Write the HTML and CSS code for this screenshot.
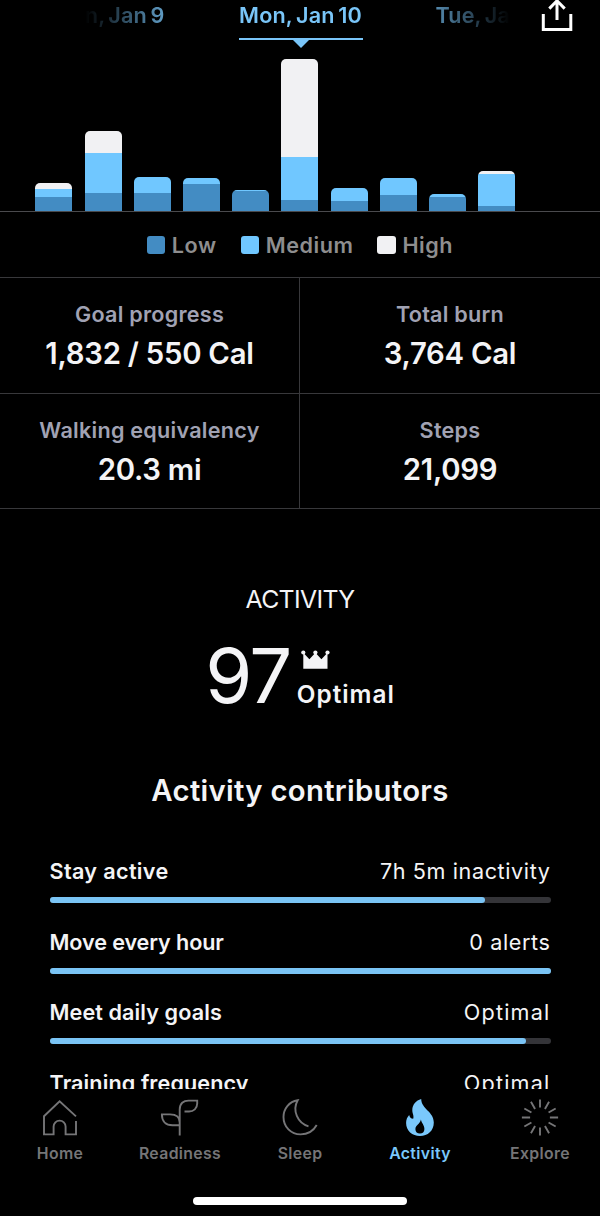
FILE: index.html
```html
<!DOCTYPE html>
<html lang="en">
<head>
<meta charset="utf-8">
<meta name="viewport" content="width=device-width, initial-scale=1">
<title>Activity</title>
<link rel="stylesheet" href="styles.css">
</head>
<body>
<div class="app">
  <main class="content">
    <header class="header">
      <nav class="dates">
        <span class="date date-prev">Sun, Jan 9</span>
        <span class="date date-current">Mon, Jan 10</span>
        <span class="date date-next">Tue, Jan 11</span>
      </nav>
      <svg class="share" viewBox="0 0 36 34" aria-label="Share">
        <path d="M4.3 14V29.6H31.8V14M18 20V0M10.3 8.6 18 .8l7.7 7.8"/>
      </svg>
    </header>

    <section class="chart">
      <div class="bar"><i class="high" style="height:6px"></i><i class="medium" style="height:8px"></i><i class="low" style="height:14px"></i></div>
      <div class="bar"><i class="high" style="height:22px"></i><i class="medium" style="height:39.5px"></i><i class="low" style="height:18.5px"></i></div>
      <div class="bar"><i class="medium" style="height:15.5px"></i><i class="low" style="height:18.5px"></i></div>
      <div class="bar"><i class="medium" style="height:6px"></i><i class="low" style="height:27px"></i></div>
      <div class="bar"><i class="medium" style="height:1px"></i><i class="low" style="height:20px"></i></div>
      <div class="bar"><i class="high" style="height:98px"></i><i class="medium" style="height:43.5px"></i><i class="low" style="height:11px"></i></div>
      <div class="bar"><i class="medium" style="height:13px"></i><i class="low" style="height:10px"></i></div>
      <div class="bar"><i class="medium" style="height:17px"></i><i class="low" style="height:16px"></i></div>
      <div class="bar"><i class="medium" style="height:3px"></i><i class="low" style="height:14px"></i></div>
      <div class="bar"><i class="high" style="height:3px"></i><i class="medium" style="height:31.5px"></i><i class="low" style="height:5.5px"></i></div>
    </section>

    <div class="legend">
      <span class="key"><i class="swatch low"></i>Low</span>
      <span class="key"><i class="swatch medium"></i>Medium</span>
      <span class="key"><i class="swatch high"></i>High</span>
    </div>

    <section class="stats">
      <div class="stat"><span class="stat-label">Goal progress</span><span class="stat-value">1,832 / 550 Cal</span></div>
      <div class="stat"><span class="stat-label">Total burn</span><span class="stat-value">3,764 Cal</span></div>
      <div class="stat"><span class="stat-label">Walking equivalency</span><span class="stat-value">20.3 mi</span></div>
      <div class="stat"><span class="stat-label">Steps</span><span class="stat-value">21,099</span></div>
    </section>

    <section class="summary">
      <h1 class="title">ACTIVITY</h1>
      <div class="score">
        <span class="score-number">97</span>
        <div class="score-side">
          <svg class="crown" viewBox="0 0 29 19">
            <path d="M2.3 2.7 8.4 9.3 14.4 2.7l6 6.6 6.1-6.6v16H2.3z"/>
            <circle cx="2.3" cy="2.5" r="2.1"/><circle cx="14.4" cy="2.5" r="2.1"/><circle cx="26.5" cy="2.5" r="2.1"/>
          </svg>
          <span class="score-word">Optimal</span>
        </div>
      </div>
    </section>

    <h2 class="heading">Activity contributors</h2>
    <section class="contributors">
      <div class="row">
        <div class="row-text"><span class="row-name loose">Stay active</span><span class="row-value">7h 5m inactivity</span></div>
        <div class="track"><div class="fill" style="width:87%"></div></div>
      </div>
      <div class="row">
        <div class="row-text"><span class="row-name tight">Move every hour</span><span class="row-value">0 alerts</span></div>
        <div class="track"><div class="fill" style="width:100%"></div></div>
      </div>
      <div class="row">
        <div class="row-text"><span class="row-name">Meet daily goals</span><span class="row-value wide">Optimal</span></div>
        <div class="track"><div class="fill" style="width:95.1%"></div></div>
      </div>
      <div class="row">
        <div class="row-text"><span class="row-name">Training frequency</span><span class="row-value wide">Optimal</span></div>
      </div>
    </section>
  </main>

  <footer class="footer">
    <nav class="tabs">
      <a class="tab">
        <svg class="icon" viewBox="0 0 40 40"><path d="M36 18.4 19.6 3.4 4 18.2V36.4H13.6V28.6a6 6 0 0 1 12 0V36.4H36V23"/></svg>
        Home
      </a>
      <a class="tab">
        <svg class="icon" viewBox="0 0 40 40"><path d="M19.7 37.4V11.5C19.7 5.5 23.5 2.6 28.5 2.6H37.2V5.6C37.2 10.5 33.6 13.5 29 13.5H24.5M19.7 27.3H12.5C5.5 27.3 1.9 23 1.9 16.4H10C16 16.4 19.7 19 19.7 24.5"/></svg>
        Readiness
      </a>
      <a class="tab">
        <svg class="icon" viewBox="0 0 40 40"><path d="M28.5 28.3C17.5 25 12 12.5 17.7 2.3 9 3.5 3.5 11 3.5 19 3.5 29 11 36.4 20.5 36.4 27.5 36.4 33.5 32.8 36.7 27"/></svg>
        Sleep
      </a>
      <a class="tab active">
        <svg class="icon flame" viewBox="0 0 40 40"><path fill-rule="evenodd" d="M21.2 1C21.3 11 33.8 13.5 33.8 24.5 33.8 32.8 27.8 38 20 38S6.1 32.8 6.1 25C6.1 21.7 7.2 19.2 9.2 17 9.6 19.3 11 20.7 13.2 20.8 14.2 17.8 12.2 15.5 12.3 12 12.4 6.5 16 2.5 21.2 1ZM20.9 21.5C20.3 26 15.4 27 15.4 31.2 15.4 34 17.3 35.6 19.9 35.6S24.4 33.9 24.4 31C24.4 27 21.5 25 20.9 21.5Z"/></svg>
        Activity
      </a>
      <a class="tab">
        <svg class="icon" viewBox="0 0 40 40"><path d="M20 1.4V9.6M20 29.4V37.6M1.9 19.5H10.1M29.9 19.5H38.1M10.95 3.83 15.05 10.93M24.95 28.07 29.05 35.17M4.33 10.45 11.43 14.55M28.57 24.45 35.67 28.55M4.33 28.55 11.43 24.45M28.57 14.55 35.67 10.45M10.95 35.17 15.05 28.07M24.95 10.93 29.05 3.83"/></svg>
        Explore
      </a>
    </nav>
    <div class="home-indicator"></div>
  </footer>
</div>
</body>
</html>
```
FILE: styles.css
```css
:root {
  --low: #438cc3;
  --medium: #70c7ff;
  --high: #f1f1f3;
  --line: #38383b;
  --text: #f4f4f6;
}

* { box-sizing: border-box; }

body {
  margin: 0;
  background: #000;
  color: var(--text);
  font-family: Inter, "Liberation Sans", sans-serif;
  font-weight: 600;
  font-size: 21.6px;
  line-height: 28px;
}

.app { width: 600px; height: 1216px; overflow: hidden; }
.content { height: 1089px; overflow: hidden; }

/* Date strip */
.header { display: flex; height: 58px; }
.dates {
  display: flex;
  justify-content: center;
  align-items: flex-start;
  gap: 74px;
  width: 430px;
  margin-left: 85px;
  padding-top: 2px;
  overflow: hidden;
  color: #79c5f8;
  letter-spacing: .15px;
  word-spacing: -2px;
  white-space: nowrap;
  mask-image: linear-gradient(90deg, transparent, #000 90px, #000 335px, transparent 425px);
}
.date { flex: none; width: 124px; line-height: 27px; text-align: center; }
.date-prev { display: flex; justify-content: flex-end; opacity: .9; }
.date-next { margin-left: -1px; text-align: left; opacity: .85; }
.date-current {
  position: relative;
  padding-bottom: 9px;
  border-bottom: 2px solid #79c5f8;
}
.date-current::after {
  content: "";
  position: absolute;
  top: 37px;
  left: 53px;
  border: 9px solid transparent;
  border-top: 9px solid #79c5f8;
  border-bottom: 0;
}
.share {
  width: 36px;
  height: 34px;
  margin-left: 24px;
  fill: none;
  stroke: #fff;
  stroke-width: 3;
}

/* Chart */
.chart {
  display: flex;
  align-items: flex-end;
  gap: 12.2px;
  height: 154px;
  padding-left: 35.4px;
  border-bottom: 1px solid #4a4a4d;
}
.bar {
  display: flex;
  flex-direction: column;
  width: 37px;
  border-radius: 5px 5px 0 0;
  overflow: hidden;
}
.low { background: var(--low); }
.medium { background: var(--medium); }
.high { background: var(--high); }

.legend {
  display: flex;
  justify-content: center;
  align-items: center;
  gap: 24px;
  height: 65px;
  padding-top: 1px;
  color: #8e8e8f;
  letter-spacing: .55px;
}
.key { display: flex; align-items: center; gap: 6.5px; }
.swatch { width: 18.5px; height: 18.5px; border-radius: 3px; }

/* Stats grid */
.stats {
  display: grid;
  grid-template-columns: 300px 300px;
  grid-template-rows: 116px 115px;
  border-top: 1px solid var(--line);
}
.stat {
  display: flex;
  flex-direction: column;
  align-items: center;
  gap: 8px;
  padding-top: 22px;
  border-bottom: 1px solid var(--line);
}
.stat:nth-child(odd) { border-right: 1px solid var(--line); }
.stat-label { color: #a0a2b3; letter-spacing: .25px; }
.stat-value { font-size: 29.3px; line-height: 36px; letter-spacing: -.25px; }

/* Score */
.summary { padding-top: 75px; text-align: center; }
.title {
  margin: 0;
  font-size: 24.8px;
  font-weight: 400;
  line-height: 30px;
  letter-spacing: -.65px;
}
.score {
  display: flex;
  justify-content: center;
  gap: 6px;
  height: 80px;
  margin-top: 22px;
}
.score-number {
  font-size: 76px;
  font-weight: 400;
  line-height: 79px;
  letter-spacing: -1.5px;
}
.score-side {
  display: flex;
  flex-direction: column;
  align-items: flex-start;
  gap: 10px;
  padding-top: 14px;
}
.crown { width: 29px; height: 19px; margin-left: 4px; fill: var(--text); }
.score-word { font-size: 24.3px; line-height: 30px; letter-spacing: 1px; }

/* Contributors */
.heading {
  margin: 57px 0 48px;
  font-size: 29.3px;
  font-weight: 600;
  line-height: 36px;
  letter-spacing: .3px;
  text-align: center;
}
.contributors {
  display: flex;
  flex-direction: column;
  gap: 24.7px;
  padding: 0 49.5px;
}
.row { display: flex; flex-direction: column; gap: 12px; }
.row-text { display: flex; justify-content: space-between; }
.row-name { letter-spacing: .1px; }
.row-name.loose { letter-spacing: .35px; }
.row-name.tight { letter-spacing: -.1px; }
.row-value { font-weight: 400; letter-spacing: .6px; }
.row-value.wide { letter-spacing: 1.2px; }
.track { height: 6px; border-radius: 3px; background: #343438; }
.fill { height: 6px; border-radius: 3px; background: #7ac4f5; }

/* Tab bar */
.footer { height: 127px; padding-top: 9px; }
.tabs { display: grid; grid-template-columns: repeat(5, 1fr); }
.tab {
  display: flex;
  flex-direction: column;
  align-items: center;
  gap: 5px;
  color: #757577;
  font-size: 15.8px;
  line-height: 21px;
  letter-spacing: .35px;
}
.icon { width: 40px; height: 40px; fill: none; stroke: currentColor; stroke-width: 1.9; }
.tab.active { color: #7ac8fb; }
.flame { fill: currentColor; stroke: none; }
.home-indicator {
  width: 214px;
  height: 8px;
  margin: 33px auto 0;
  border-radius: 4px;
  background: #fff;
}
```
